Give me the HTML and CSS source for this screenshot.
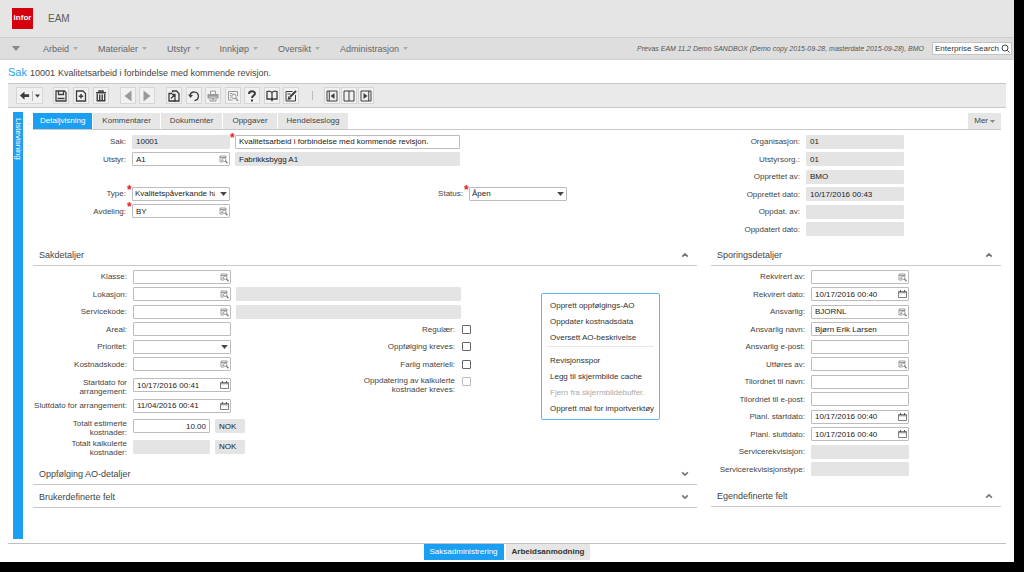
FILE: index.html
```html
<!DOCTYPE html>
<html lang="no">
<head>
<meta charset="utf-8">
<title>EAM - Sak 10001</title>
<link rel="stylesheet" href="styles.css">
</head>
<body>
<svg class="sprite" aria-hidden="true">
  <symbol id="caret" viewBox="0 0 10 6"><path d="M0 0h10L5 6z" fill="currentColor"/></symbol>
  <symbol id="lookup" viewBox="0 0 18 18"><g fill="none" stroke="currentColor" stroke-width="1.4"><path d="M8 14H2V2h12v4M2 5h12M4.500 8h2M4.500 11h2"/><circle cx="10.500" cy="9.500" r="3.500"/><path d="M13 12l4 4.500" stroke-width="2.400"/></g></symbol>
  <symbol id="calendar" viewBox="0 0 18 16"><g fill="none" stroke="currentColor" stroke-width="1.500"><path d="M1 3h16v12H1zM1 5.500h16"/><path d="M5 0v4M13 0v4" stroke-width="2"/></g></symbol>
  <symbol id="up" viewBox="0 0 14 10"><path d="M2 8l5-5 5 5" fill="none" stroke="currentColor" stroke-width="3"/></symbol>
  <symbol id="down" viewBox="0 0 14 10"><path d="M2 2l5 5 5-5" fill="none" stroke="currentColor" stroke-width="3"/></symbol>
  <symbol id="search" viewBox="0 0 18 18"><g fill="none" stroke="currentColor" stroke-width="1.800"><circle cx="8" cy="8" r="6"/><path d="M12.500 12.500L17 17"/></g></symbol>
  <symbol id="back" viewBox="0 0 24 24"><path d="M2 12l10-9v6h10v6H12v6z" fill="currentColor"/></symbol>
  <symbol id="save" viewBox="0 0 24 24"><g fill="none" stroke="currentColor" stroke-width="2.600"><path d="M2 2h17l3 3v17H2zM7 2v7h10V2"/><path d="M5 17h14" stroke-width="3"/></g></symbol>
  <symbol id="new" viewBox="0 0 24 24"><g fill="none" stroke="currentColor" stroke-width="2.600"><path d="M3 2h13l5 5v15H3z"/><path d="M12 8v9M7.500 12.500h9" stroke-width="3"/></g></symbol>
  <symbol id="trash" viewBox="0 0 24 24"><g fill="none" stroke="currentColor" stroke-width="2.800"><path d="M2 5.500h20M8 5V2h8v3M4.500 8v13.500h15V8M9.500 9v11M14.500 9v11"/></g></symbol>
  <symbol id="prev" viewBox="0 0 24 24"><path d="M19 1v22L5 12z" fill="currentColor"/></symbol>
  <symbol id="next" viewBox="0 0 24 24"><path d="M5 1v22l14-11z" fill="currentColor"/></symbol>
  <symbol id="copy" viewBox="0 0 24 24"><g fill="none" stroke="currentColor" stroke-width="2.600"><path d="M9 5V2h8l5 5v15H11"/><path d="M8 7H2v15h12v-7"/><path d="M6 17l8-8M8 9h6v6"/></g></symbol>
  <symbol id="undo" viewBox="0 0 24 24"><path d="M4 11a8.500 8.500 0 1 1 9 10" fill="none" stroke="currentColor" stroke-width="2.600"/><path d="M0 9l10 1-5 6z" fill="currentColor"/></symbol>
  <symbol id="print" viewBox="0 0 24 24"><g fill="none" stroke="currentColor" stroke-width="2"><path d="M7 8V2h10v6M6 14h12v8H6zM9 17h6M9 19.500h6"/></g><path d="M1 8h22v9h-4v-4H5v4H1z" fill="currentColor"/></symbol>
  <symbol id="preview" viewBox="0 0 24 24"><g fill="none" stroke="currentColor" stroke-width="2"><path d="M11 20H3V3h18v9M6 7h5M6 11h2M6 15h2"/><circle cx="14" cy="13" r="4.500"/><path d="M17 16l5 6" stroke-width="3"/></g></symbol>
  <symbol id="help" viewBox="0 0 24 24"><path d="M6 8c0-7 12-7 12-1 0 4-6 4-6 9" fill="none" stroke="currentColor" stroke-width="4"/><path d="M10 19h4v4h-4z" fill="currentColor"/></symbol>
  <symbol id="book" viewBox="0 0 24 24"><path d="M12 5C9 2 5 2 2 3v15h8l2 3 2-3h8V3c-3-1-7-1-10 2v14" fill="none" stroke="currentColor" stroke-width="2.600"/></symbol>
  <symbol id="edit" viewBox="0 0 24 24"><g fill="none" stroke="currentColor" stroke-width="2"><path d="M15 3H2v19h19V10M5 8h6"/><path d="M22 2L10 14" stroke-width="4"/></g><path d="M5 20l2-8 6 6z" fill="currentColor"/></symbol>
  <symbol id="paneleft" viewBox="0 0 24 24"><path d="M2 2h20v20H2zM6.500 2v20" fill="none" stroke="currentColor" stroke-width="2"/><path d="M17 6v12l-8-6z" fill="currentColor"/></symbol>
  <symbol id="panesplit" viewBox="0 0 24 24"><path d="M2 2h20v20H2zM12 2v20" fill="none" stroke="currentColor" stroke-width="2"/></symbol>
  <symbol id="paneright" viewBox="0 0 24 24"><path d="M2 2h20v20H2zM17.500 2v20" fill="none" stroke="currentColor" stroke-width="2"/><path d="M7 6v12l8-6z" fill="currentColor"/></symbol>
</svg>

<div class="app">
  <header class="brand"><span class="logo">infor</span><span class="product">EAM</span></header>

  <nav class="menubar">
    <button class="menu-home" aria-label="Meny"><svg><use href="#caret"/></svg></button>
    <button class="menu-item">Arbeid<svg><use href="#caret"/></svg></button>
    <button class="menu-item">Materialer<svg><use href="#caret"/></svg></button>
    <button class="menu-item">Utstyr<svg><use href="#caret"/></svg></button>
    <button class="menu-item">Innkjøp<svg><use href="#caret"/></svg></button>
    <button class="menu-item">Oversikt<svg><use href="#caret"/></svg></button>
    <button class="menu-item">Administrasjon<svg><use href="#caret"/></svg></button>
    <span class="tenant">Prevas EAM 11.2 Demo SANDBOX (Demo copy 2015-09-28, masterdate 2015-09-28), BMO</span>
    <div class="search"><input type="text" aria-label="Enterprise Search" value="Enterprise Search"><button aria-label="Søk"><svg><use href="#search"/></svg></button></div>
  </nav>

  <h1 class="record"><span class="record-type">Sak</span><span>10001</span><span>Kvalitetsarbeid i forbindelse med kommende revisjon.</span></h1>

  <div class="toolbar" role="toolbar">
    <div class="split"><button aria-label="Tilbake"><svg><use href="#back"/></svg></button><button class="split-arrow" aria-label="Historikk"><svg><use href="#caret"/></svg></button></div>
    <div class="tools tools-record">
      <button class="tool" aria-label="Lagre"><svg><use href="#save"/></svg></button>
      <button class="tool" aria-label="Ny"><svg><use href="#new"/></svg></button>
      <button class="tool" aria-label="Slett"><svg><use href="#trash"/></svg></button>
    </div>
    <div class="tools tools-step">
      <button class="tool dim" aria-label="Forrige"><svg><use href="#prev"/></svg></button>
      <button class="tool dim" aria-label="Neste"><svg><use href="#next"/></svg></button>
    </div>
    <div class="tools tools-action">
      <button class="tool" aria-label="Kopier"><svg><use href="#copy"/></svg></button>
      <button class="tool" aria-label="Angre"><svg><use href="#undo"/></svg></button>
      <button class="tool dim" aria-label="Skriv ut"><svg><use href="#print"/></svg></button>
      <button class="tool dim" aria-label="Forhåndsvis"><svg><use href="#preview"/></svg></button>
      <button class="tool" aria-label="Hjelp"><svg><use href="#help"/></svg></button>
      <button class="tool" aria-label="Håndbok"><svg><use href="#book"/></svg></button>
      <button class="tool" aria-label="Rediger"><svg><use href="#edit"/></svg></button>
    </div>
    <div class="divider"></div>
    <div class="tools tools-view">
      <button class="tool" aria-label="Vis venstre"><svg><use href="#paneleft"/></svg></button>
      <button class="tool" aria-label="Delt visning"><svg><use href="#panesplit"/></svg></button>
      <button class="tool" aria-label="Vis høyre"><svg><use href="#paneright"/></svg></button>
    </div>
  </div>

  <main class="work">
    <button class="list-toggle">Listevisning</button>
    <div class="content">
      <div class="tabs">
        <button class="tab active">Detaljvisning</button>
        <button class="tab">Kommentarer</button>
        <button class="tab">Dokumenter</button>
        <button class="tab">Oppgaver</button>
        <button class="tab">Hendelseslogg</button>
        <button class="tab more">Mer<svg><use href="#caret"/></svg></button>
      </div>

      <div class="columns">
        <section class="summary">
          <div class="rows">
            <div class="row"><label for="sak">Sak:</label><div class="field"><input id="sak" readonly value="10001"></div>
              <div class="field wide required"><input aria-label="Beskrivelse" value="Kvalitetsarbeid i forbindelse med kommende revisjon."></div></div>
            <div class="row"><label for="utstyr">Utstyr:</label><div class="field"><input id="utstyr" value="A1"><button aria-label="Søk utstyr"><svg><use href="#lookup"/></svg></button></div>
              <div class="field wide"><input aria-label="Utstyrsbeskrivelse" readonly value="Fabrikksbygg A1"></div></div>
          </div>
          <div class="rows second">
            <div class="row"><label for="type">Type:</label><div class="field required"><select id="type"><option>Kvalitetspåverkande händelse</option></select><svg class="arrow"><use href="#caret"/></svg></div>
              <label class="status-label" for="status">Status:</label><div class="field required"><select id="status"><option>Åpen</option></select><svg class="arrow"><use href="#caret"/></svg></div></div>
            <div class="row"><label for="avd">Avdeling:</label><div class="field required"><input id="avd" value="BY"><button aria-label="Søk avdeling"><svg><use href="#lookup"/></svg></button></div></div>
          </div>
        </section>

        <section class="rows audit">
          <div class="row"><label for="org">Organisasjon:</label><div class="field"><input id="org" readonly value="01"></div></div>
          <div class="row"><label for="uorg">Utstyrsorg.:</label><div class="field"><input id="uorg" readonly value="01"></div></div>
          <div class="row"><label for="oav">Opprettet av:</label><div class="field"><input id="oav" readonly value="BMO"></div></div>
          <div class="row"><label for="odato">Opprettet dato:</label><div class="field"><input id="odato" readonly value="10/17/2016 00:43"></div></div>
          <div class="row"><label for="uav">Oppdat. av:</label><div class="field"><input id="uav" readonly></div></div>
          <div class="row"><label for="udato">Oppdatert dato:</label><div class="field"><input id="udato" readonly></div></div>
        </section>

        <div class="panel">
          <h2 class="heading">Sakdetaljer<button aria-label="Skjul Sakdetaljer"><svg><use href="#up"/></svg></button></h2>
          <div class="details">
            <div class="details-main">
              <div class="rows">
                <div class="row"><label for="klasse">Klasse:</label><div class="field"><input id="klasse"><button aria-label="Søk klasse"><svg><use href="#lookup"/></svg></button></div></div>
                <div class="row"><label for="lok">Lokasjon:</label><div class="field"><input id="lok"><button aria-label="Søk lokasjon"><svg><use href="#lookup"/></svg></button></div></div>
                <div class="row"><label for="serv">Servicekode:</label><div class="field"><input id="serv"><button aria-label="Søk servicekode"><svg><use href="#lookup"/></svg></button></div></div>
                <div class="row"><label for="areal">Areal:</label><div class="field"><input id="areal"></div></div>
                <div class="row"><label for="pri">Prioritet:</label><div class="field"><select id="pri"><option></option></select><svg class="arrow"><use href="#caret"/></svg></div></div>
                <div class="row"><label for="kost">Kostnadskode:</label><div class="field"><input id="kost"><button aria-label="Søk kostnadskode"><svg><use href="#lookup"/></svg></button></div></div>
              </div>
              <div class="rows tall">
                <div class="row"><label class="two" for="start">Startdato for<br>arrangement:</label><div class="field"><input id="start" value="10/17/2016 00:41"><button class="date" aria-label="Velg startdato"><svg><use href="#calendar"/></svg></button></div></div>
                <div class="row"><label for="slutt">Sluttdato for arrangement:</label><div class="field"><input id="slutt" value="11/04/2016 00:41"><button class="date" aria-label="Velg sluttdato"><svg><use href="#calendar"/></svg></button></div></div>
                <div class="row"><label class="two" for="est">Totalt estimerte<br>kostnader:</label><div class="field amount"><input id="est" value="10.00"></div><div class="field currency"><input aria-label="Valuta, estimert" readonly value="NOK"></div></div>
                <div class="row"><label class="two" for="kalk">Totalt kalkulerte<br>kostnader:</label><div class="field amount"><input id="kalk" readonly></div><div class="field currency"><input aria-label="Valuta, kalkulert" readonly value="NOK"></div></div>
              </div>
            </div>
            <div class="rows details-side">
              <div class="row"><div class="field wide"><input aria-label="Lokasjonsbeskrivelse" readonly></div></div>
              <div class="row"><div class="field wide"><input aria-label="Servicekodebeskrivelse" readonly></div></div>
              <div class="row"><label for="reg">Regulær:</label><input type="checkbox" id="reg"></div>
              <div class="row"><label for="opp">Oppfølging kreves:</label><input type="checkbox" id="opp"></div>
              <div class="row"><label for="farlig">Farlig materiell:</label><input type="checkbox" id="farlig"></div>
              <div class="row"><label class="two" for="kalkkrev">Oppdatering av kalkulerte<br>kostnader kreves:</label><input type="checkbox" id="kalkkrev" disabled></div>
            </div>
            <div class="popup" role="menu">
              <button role="menuitem">Opprett oppfølgings-AO</button>
              <button role="menuitem">Oppdater kostnadsdata</button>
              <button role="menuitem">Oversett AO-beskrivelse</button>
              <hr>
              <button role="menuitem">Revisjonsspor</button>
              <button role="menuitem">Legg til skjermbilde cache</button>
              <button role="menuitem" disabled>Fjern fra skjermbildebuffer.</button>
              <button role="menuitem">Opprett mal for importverktøy</button>
            </div>
          </div>
          <h2 class="heading">Oppfølging AO-detaljer<button aria-label="Vis Oppfølging AO-detaljer"><svg><use href="#down"/></svg></button></h2>
          <h2 class="heading tight">Brukerdefinerte felt<button aria-label="Vis Brukerdefinerte felt"><svg><use href="#down"/></svg></button></h2>
        </div>

        <div class="panel">
          <h2 class="heading">Sporingsdetaljer<button aria-label="Skjul Sporingsdetaljer"><svg><use href="#up"/></svg></button></h2>
          <div class="rows tracking">
            <div class="row"><label for="rav">Rekvirert av:</label><div class="field"><input id="rav"><button aria-label="Søk rekvirent"><svg><use href="#lookup"/></svg></button></div></div>
            <div class="row"><label for="rdato">Rekvirert dato:</label><div class="field"><input id="rdato" value="10/17/2016 00:40"><button class="date" aria-label="Velg rekvirert dato"><svg><use href="#calendar"/></svg></button></div></div>
            <div class="row"><label for="ans">Ansvarlig:</label><div class="field"><input id="ans" value="BJORNL"><button aria-label="Søk ansvarlig"><svg><use href="#lookup"/></svg></button></div></div>
            <div class="row"><label for="ansn">Ansvarlig navn:</label><div class="field"><input id="ansn" value="Bjørn Erik Larsen"></div></div>
            <div class="row"><label for="anse">Ansvarlig e-post:</label><div class="field"><input id="anse"></div></div>
            <div class="row"><label for="utf">Utføres av:</label><div class="field"><input id="utf"><button aria-label="Søk utfører"><svg><use href="#lookup"/></svg></button></div></div>
            <div class="row"><label for="tn">Tilordnet til navn:</label><div class="field"><input id="tn"></div></div>
            <div class="row"><label for="te">Tilordnet til e-post:</label><div class="field"><input id="te"></div></div>
            <div class="row"><label for="ps">Planl. startdato:</label><div class="field"><input id="ps" value="10/17/2016 00:40"><button class="date" aria-label="Velg planlagt startdato"><svg><use href="#calendar"/></svg></button></div></div>
            <div class="row"><label for="pl">Planl. sluttdato:</label><div class="field"><input id="pl" value="10/17/2016 00:40"><button class="date" aria-label="Velg planlagt sluttdato"><svg><use href="#calendar"/></svg></button></div></div>
            <div class="row"><label for="sr">Servicerekvisisjon:</label><div class="field"><input id="sr" readonly></div></div>
            <div class="row"><label for="st">Servicerekvisisjonstype:</label><div class="field"><input id="st" readonly></div></div>
          </div>
          <h2 class="heading">Egendefinerte felt<button aria-label="Skjul Egendefinerte felt"><svg><use href="#up"/></svg></button></h2>
        </div>
      </div>
    </div>
  </main>

  <footer class="screens">
    <button class="screen active">Saksadministrering</button>
    <button class="screen">Arbeidsanmodning</button>
  </footer>
</div>
</body>
</html>
```
FILE: styles.css
```css
* { box-sizing: border-box; }

body {
  margin: 0;
  padding: 0 10px 10px 0;
  background: #000;
  color: #444;
  font: 8px/10px "Liberation Sans", Arial, sans-serif;
}

button, input, select { font: inherit; color: inherit; margin: 0; }
button { border: 0; padding: 0; background: none; cursor: pointer; }
svg { display: block; }
.sprite { position: absolute; width: 0; height: 0; }

.app {
  display: flex;
  flex-direction: column;
  min-height: calc(100vh - 10px);
  background: #fff;
}

/* Brand and menu */
.brand {
  display: flex;
  align-items: center;
  gap: 15px;
  height: 37px;
  padding-left: 12px;
  background: #e5e5e5;
}
.logo {
  width: 21px;
  height: 21px;
  background: #d5000e;
  color: #fff;
  font-weight: bold;
  line-height: 19px;
  text-align: center;
}
.product { font-size: 10px; color: #5c5c5c; }

.menubar {
  display: flex;
  align-items: center;
  gap: 20px;
  height: 23px;
  padding: 0 2px 0 11px;
  border: solid #cfcfcf;
  border-width: 1px 0;
  background: #dedede;
}
.menu-home { margin-right: 2px; color: #8a8a8a; }
.menu-home svg { width: 10px; height: 5px; }
.menu-item { display: flex; align-items: center; gap: 4px; font-size: 9px; color: #666; }
.menu-item svg { width: 5px; height: 3px; color: #aaa; }
.tenant { margin-left: auto; margin-right: -12px; font-size: 7px; font-style: italic; color: #555; }
.search {
  display: flex;
  align-items: center;
  width: 80px;
  height: 13px;
  background: #fff;
  border: 1px solid #c4c4c4;
  color: #333;
}
.search input { flex: 1; min-width: 0; padding: 0 0 0 2px; border: 0; background: none; }
.search svg { width: 9px; height: 9px; margin-right: 1px; }

/* Record title */
.record {
  display: flex;
  align-items: baseline;
  gap: 3px;
  margin: 0;
  padding: 6px 8px 4px;
  font-size: 9px;
  font-weight: normal;
  line-height: 12px;
}
.record-type { font-size: 11px; color: #1a9ff0; }

/* Toolbar */
.toolbar {
  display: flex;
  align-items: center;
  height: 25px;
  margin: 0 8px;
  padding-left: 8px;
  border: solid #c8c8c8;
  border-width: 1px 0;
  background: #eaeaea;
}
.tools { display: flex; justify-content: space-between; }
.tools-record { width: 56px; margin-left: 10px; }
.tools-step { width: 35px; margin-left: 11px; }
.tools-action { width: 133px; margin-left: 11px; }
.tools-view { width: 50px; }
.tool, .split {
  display: flex;
  align-items: center;
  justify-content: center;
  width: 16px;
  height: 17px;
  border: 1px solid #d6d6d6;
  background: #f1f1f1;
  color: #3c3c3c;
}
.tool svg { width: 12px; height: 12px; }
.tool.dim { color: #9a9a9a; }
.split { width: 27px; gap: 2px; }
.split svg { width: 11px; height: 11px; }
.split-arrow { padding-left: 2px; border-left: 1px solid #bbb; }
.split-arrow svg { width: 5px; height: 10px; }
.divider { width: 1px; height: 9px; margin: 0 11px 0 13px; background: #bbb; }

/* Work area */
.work {
  display: flex;
  flex: 1;
  gap: 10px;
  padding: 4px 13px;
}
.list-toggle {
  display: flex;
  align-items: center;
  width: 10px;
  padding-top: 6px;
  background: #1b9ff2;
  color: #fff;
  writing-mode: vertical-rl;
}
.content { flex: 1; min-width: 0; }

.tabs {
  display: flex;
  gap: 1px;
  height: 18px;
  padding-top: 1px;
  border-bottom: 1px solid #c8c8c8;
}
.tab { padding: 0 9px; background: #e6e6e6; }
.tab.active { padding: 0 7px; background: #1b9ff2; color: #fff; }
.more { display: flex; align-items: center; gap: 2px; margin-left: auto; padding: 0 6px; }
.more svg { width: 5px; height: 3px; color: #888; }

.columns {
  display: grid;
  grid-template-columns: 1fr 290px;
  column-gap: 14px;
  padding-top: 3px;
}

/* Form rows */
.row { display: flex; align-items: center; gap: 5px; height: 18px; }
.row:nth-child(odd) { height: 17px; }
.row > label { flex: none; width: 93px; margin-right: 1px; text-align: right; line-height: 9px; }
.second { margin-top: 17px; }
.row > .status-label { width: 228px; }
.audit .row > label { width: 89px; }
.details .row > label, .tracking .row > label { width: 94px; }
.row > .two { align-self: flex-start; margin-top: 3px; }

.field { position: relative; flex: none; width: 98px; height: 14px; }
.field.wide { width: 225px; }
.field.amount { width: 77px; }
.field.currency { width: 30px; }
.amount input { text-align: right; }
.field input, .field select {
  display: block;
  width: 100%;
  height: 100%;
  padding: 0 3px;
  border: 1px solid #bcbcbc;
  border-radius: 1px;
  background: #fff;
  color: #222;
  appearance: none;
}
.field select { padding: 0 14px 0 2px; }
.field input:read-only { border-color: #e4e4e4; background: #e4e4e4; }
.field button { position: absolute; top: 3px; right: 2px; color: #777; }
.field button svg { width: 9px; height: 9px; }
.field .date { color: #555; }
.field .date svg { height: 8px; }
.field .arrow { position: absolute; top: 5px; right: 3px; width: 7px; height: 4px; color: #444; pointer-events: none; }
.required::before {
  content: "*";
  position: absolute;
  top: -3px;
  left: -5px;
  color: #e0202a;
  font-size: 12px;
  font-weight: bold;
  line-height: 12px;
}

input[type="checkbox"] {
  width: 9px;
  height: 9px;
  border: 1px solid #666;
  border-radius: 1px;
  background: #fff;
  appearance: none;
}
input[type="checkbox"]:disabled { border-color: #bbb; }

/* Sections */
.heading {
  display: flex;
  align-items: center;
  height: 21px;
  margin: 7px 0 0;
  padding: 0 8px 0 6px;
  border-bottom: 1px solid #c8c8c8;
  font-size: 9px;
  font-weight: normal;
}
.heading.tight { margin-top: 2px; }
.heading button { margin-left: auto; color: #777; }
.heading svg { width: 8px; height: 6px; }

.details { position: relative; display: flex; gap: 5px; padding-top: 2px; }
.details-main { flex: none; width: 198px; }
.tall { margin-top: 2px; }
.tall .row { height: 21px; }
.tall .row:nth-child(odd) { height: 20px; }
.details-side { padding-top: 17px; }
.details-side .row { height: 17px; }
.details-side .row:nth-child(odd) { height: 18px; }
.details-side .row > label { width: 219px; margin-right: 2px; }
.tracking { padding: 2px 0 1px; }

.popup {
  position: absolute;
  top: 27px;
  left: 508px;
  display: flex;
  flex-direction: column;
  padding: 4px 5px 2px;
  border: 1px solid #5db7ee;
  border-radius: 2px;
  background: #fff;
}
.popup button { height: 16px; padding: 0 0 0 3px; text-align: left; color: #333; white-space: nowrap; }
.popup button:disabled { color: #aaa; }
.popup hr { width: 100%; height: 1px; margin: 0 0 6px; border: 0; background: #e8e8e8; }

/* Screen switcher */
.screens {
  display: flex;
  justify-content: center;
  gap: 2px;
  margin: 0 8px;
  padding-bottom: 2px;
  border-top: 1px solid #c0c0c0;
}
.screen { height: 16px; padding: 0 6px; background: #e6e6e6; font-weight: bold; color: #333; }
.screen.active { background: #1b9ff2; color: #fff; font-weight: normal; }
```
